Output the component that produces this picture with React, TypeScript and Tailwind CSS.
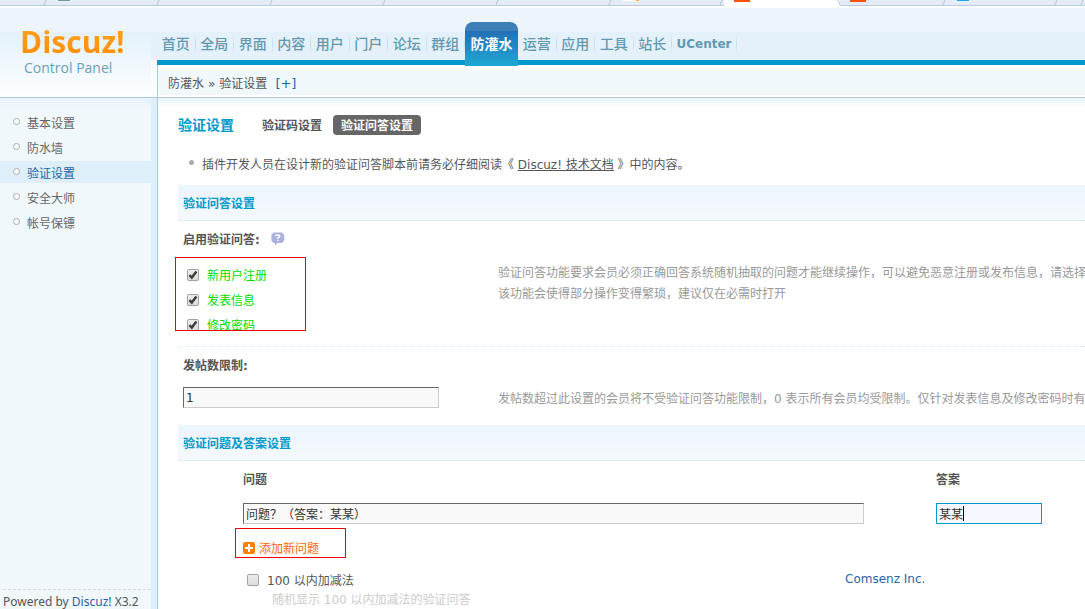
import { useState } from 'react';
import type { ReactNode } from 'react';

const menus = ['首页', '全局', '界面', '内容', '用户', '门户', '论坛', '群组', '防灌水', '运营', '应用', '工具', '站长', 'UCenter'];

const sideMenus = ['基本设置', '防水墙', '验证设置', '安全大师', '帐号保镖'];

const browserTabs = [
  { width: 'w-[48px]', icon: '' },
  { width: 'w-[113px]', icon: 'bg-[#6f9aa0] h-px w-3' },
  { width: 'w-[113px]', icon: '' },
  { width: 'w-[113px]', icon: '' },
  { width: 'w-[113px]', icon: '' },
  { width: 'w-[113px]', icon: '' },
  { width: 'w-[111px]', icon: 'bg-linear-to-r from-white from-80% to-[#ffb020] to-80% h-px w-4' },
  { width: 'w-[116px]', icon: 'bg-[#ff5010] h-0.5 w-4', active: true },
  { width: 'w-[107px]', icon: 'bg-[#ff5010] h-0.5 w-4' },
  { width: 'w-[112px]', icon: 'bg-[#1ba5ea] h-px w-3' },
  { width: 'flex-1', icon: '' },
];

function BrowserTabs() {
  return (
    <div className="flex h-2 shrink-0 overflow-hidden bg-white" aria-hidden="true">
      {browserTabs.map((tab, i) => (
        <div
          key={i}
          className={`flex h-1.5 shrink-0 justify-between border-b pl-2.5 ${tab.width} ${tab.active ? 'border-white bg-white' : 'border-[#b9cce0] bg-[#e3ecf7]'}`}
        >
          <span className={tab.icon} />
          <svg width="5" height="5" viewBox="0 0 5 5" fill="none" stroke="#b0c6dc">
            <path d={tab.active ? 'M3 0 L5 5' : 'M3 0 L1 5'} />
          </svg>
        </div>
      ))}
    </div>
  );
}

function Checkbox({ label, checked = false, className = '' }: { label: string; checked?: boolean; className?: string }) {
  const [on, setOn] = useState(checked);
  return (
    <label className={`flex w-fit items-center gap-2 ${className}`}>
      <span className="grid size-3">
        <input
          type="checkbox"
          checked={on}
          onChange={() => setOn(!on)}
          className="col-start-1 row-start-1 size-3 appearance-none rounded-xs border border-[#a3a3a3] bg-linear-to-b from-[#ededed] to-[#dcdcdc] shadow-xs"
        />
        {on && (
          <svg className="pointer-events-none col-start-1 row-start-1" width="12" height="12" viewBox="0 0 12 12" fill="none" stroke="#3c3c3c" strokeWidth="2.4">
            <path d="M2.4 6.2 L4.8 8.6 L9.4 2.6" />
          </svg>
        )}
      </span>
      <span className="pt-0.5">{label}</span>
    </label>
  );
}

function SectionTitle({ children }: { children: ReactNode }) {
  return (
    <h3 className="h-9 border-b border-dotted border-[#cfe6f5] bg-linear-to-b from-[#ecf4fd] to-[#f5f9fe] pl-[5px] font-bold leading-[38px] text-[#0099cc]">
      {children}
    </h3>
  );
}

export default function App() {
  return (
    <div className="flex h-screen flex-col overflow-hidden bg-white font-['DejaVu_Sans','Noto_Sans_CJK_SC',sans-serif] text-xs text-[#555]">
      <BrowserTabs />

      {/* Header */}
      <header className="flex h-[90px] shrink-0 border-b border-[#b0cbd8] bg-[#edf4fc]">
        <div className="flex w-[151px] shrink-0 flex-col border-b-4 border-white bg-linear-to-b from-[#edf4fc] from-[24px] via-[#e4f1fa] via-[24px] to-[#fafdff] pt-4 pl-5 font-['Open_Sans',sans-serif]">
          <div className="bg-linear-to-b from-[#ffa51f] to-[#ff8a00] bg-clip-text text-[30px] font-bold leading-[36px] text-transparent">Discuz!</div>
          <div className="pl-1 text-sm leading-4 text-[#6aa0b6]">Control Panel</div>
        </div>
        <div className="w-1.5 shrink-0 bg-linear-to-b from-[#edf4fc] from-[24px] to-[#e4f1fa] to-[24px] pt-[52px]">
          <div className="h-[37px] bg-[#fafdff]" />
        </div>

        <div className="flex min-w-0 flex-1 flex-col bg-white">
          <nav className="h-[57px] border-b-5 border-[#0099cc] bg-linear-to-b from-[#edf4fc] from-[24px] to-[#e4f1fa] to-[24px] pt-[14px]">
            <ul className="grid h-[43px] w-[580px] grid-cols-[repeat(8,1fr)_53px_repeat(4,1fr)_65px] text-sm">
              {menus.map((name) =>
                name === '防灌水' ? (
                  <li key={name} className="rounded-t-lg bg-linear-to-b from-[#3f7fb9] from-20% via-[#2370b4] via-20% to-[#1fa8d4] text-center font-bold">
                    <a href="#" className="block leading-[44px] text-white">{name}</a>
                  </li>
                ) : (
                  <li key={name} className="flex items-center justify-center text-[#6299b1]">
                    <a href="#" className={name === 'UCenter' ? 'flex-1 text-center text-xs font-bold' : 'flex-1 text-center font-medium'}>{name}</a>
                    <span className="h-5 w-px bg-linear-to-b from-[#e4f1fa] via-[#c3dcea] to-[#e4f1fa]" />
                  </li>
                ),
              )}
            </ul>
          </nav>
          <div className="flex flex-1 border-l border-[#b0cbd8] pt-[5px] pb-0.5">
            <div className="flex flex-1 items-center gap-1 bg-[#f0f8fc] pt-0.5 pl-[10px]">
              <span>防灌水</span>
              <span>»</span>
              <span>验证设置</span>
              <a href="#" className="pl-1 text-[13px] text-[#2366a8]">[+]</a>
            </div>
          </div>
        </div>
      </header>

      <div className="flex min-h-0 flex-1">
        {/* Sidebar */}
        <aside className="flex w-[158px] shrink-0 flex-col border-r border-[#b0cbd8] bg-[#deeffa]">
          <div className="mr-1.5 flex-1 bg-linear-to-b from-[#e6f2fb] to-[#f0f8fc] to-[10px] pt-[13px]">
            <ul className="flex flex-col gap-[3px]">
              {sideMenus.map((name) => (
                <li key={name} className={name === '验证设置' ? 'bg-[#deeffa] text-[#2366a8]' : 'text-[#666]'}>
                  <a href="#" className="flex h-[22px] items-center gap-[7px] pt-1 pl-[13px]">
                    <span className="mb-1.5 size-[7px] rounded-full border border-[#aaa] bg-white" />
                    {name}
                  </a>
                </li>
              ))}
            </ul>
          </div>
          <footer className="mr-1.5 bg-[#f0f8fc] pl-[3px]">
            <p className="h-5 whitespace-nowrap border-t border-dashed border-[#d5d9dc] pt-1 font-['Noto_Sans',sans-serif] leading-4">
              Powered by <a href="#" className="text-[#2366a8]">Discuz!</a> X3.2
            </p>
          </footer>
        </aside>

        {/* Content */}
        <main className="relative min-w-0 flex-1 overflow-hidden bg-linear-to-b from-[#e6f2fb] to-white to-[9px] pl-5">
          <div className="flex h-[54px] items-center">
            <h2 className="w-[84px] text-sm font-bold text-[#0099cc]">验证设置</h2>
            <a href="#" className="w-[71px] pt-0.5 font-bold">验证码设置</a>
            <a href="#" className="h-5 rounded bg-[#666] px-2 font-bold leading-[22px] text-white">验证问答设置</a>
          </div>

          <ul className="h-[33px]">
            <li className="flex items-center gap-2 whitespace-nowrap pl-[11px] leading-[26px]">
              <span className="mb-1.5 size-[5px] rounded-full bg-[#aaa]" />
              <span>
                插件开发人员在设计新的验证问答脚本前请务必仔细阅读《 <a href="#" className="underline">Discuz! 技术文档</a> 》中的内容。
              </span>
            </li>
          </ul>

          <SectionTitle>验证问答设置</SectionTitle>
          <div className="h-[126px] border-b border-dotted border-[#cfe6f5]">
            <h4 className="flex h-9 items-center gap-[11px] pt-0.5 pl-[5px] font-bold">
              启用验证问答:
              <svg className="mb-0.5" width="14" height="14" viewBox="0 0 14 14">
                <path fill="#aab2dd" d="M2.5 0.5h8.5L13.3 3v5.500L11 11H6.500L4 13.400V11H2.500L0.400 8.800V3z" />
                <path fill="none" stroke="#fff" strokeWidth="1.400" d="M4.800 4q0-1 2-1t2 1.200q0 1-1.900 1.500v1M6.900 7.700v1.300" />
              </svg>
            </h4>
            <div className="flex items-start">
              <div className="-ml-[3px] flex h-[74px] w-[131px] shrink-0 flex-col gap-[5px] overflow-hidden border border-[#f00000] pt-[7px] pl-[11px] leading-[18px] text-[#00dd00]">
                <Checkbox label="新用户注册" checked />
                <Checkbox label="发表信息" checked />
                <Checkbox label="修改密码" checked />
              </div>
              <p className="ml-48 min-w-0 flex-1 pt-1.5 leading-[21px] whitespace-nowrap text-[#999]">
                验证问答功能要求会员必须正确回答系统随机抽取的问题才能继续操作，可以避免恶意注册或发布信息，请选择
                <br />
                该功能会使得部分操作变得繁琐，建议仅在必需时打开
              </p>
            </div>
          </div>

          <div className="h-[78px]">
            <label htmlFor="minposts" className="block h-10 pl-[5px] font-bold leading-[38px]">发帖数限制:</label>
            <div className="flex items-center pl-[5px]">
              <input
                id="minposts"
                defaultValue="1"
                className="h-[21px] w-64 shrink-0 border border-t-[#666] border-r-[#ccc] border-b-[#ccc] border-l-[#666] bg-[#f9f9f9] px-0.5 text-[#333]"
              />
              <p className="ml-[59px] whitespace-nowrap pt-0.5 text-[#999]">
                发帖数超过此设置的会员将不受验证问答功能限制，0 表示所有会员均受限制。仅针对发表信息及修改密码时有
              </p>
            </div>
          </div>

          <SectionTitle>验证问题及答案设置</SectionTitle>
          <div className="flex pl-[65px]">
            <div className="w-[693px] shrink-0">
              <label htmlFor="question" className="block h-[42px] font-bold leading-[38px]">问题</label>
              <input
                id="question"
                defaultValue="问题？（答案：某某）"
                className="block h-[21px] w-[621px] border border-t-[#666] border-r-[#ccc] border-b-[#ccc] border-l-[#666] bg-[#f9f9f9] px-0.5 text-[#333]"
              />
            </div>
            <div>
              <label htmlFor="answer" className="block h-[42px] font-bold leading-[38px]">答案</label>
              <div className="relative">
                <input
                  id="answer"
                  defaultValue="某某"
                  className="block h-[21px] w-[106px] border border-[#0099cc] bg-[#f5f9ff] px-0.5 text-[#333] outline-none"
                />
                <span className="absolute top-[3px] left-[27px] h-[15px] w-px bg-black" />
              </div>
            </div>
          </div>

          <div className="mt-1 pl-[57px]">
            <button type="button" className="flex h-[30px] w-[111px] items-end gap-1 border border-[#f00000] pl-[7px] leading-4 text-[#ff6600]">
              <svg className="mb-[3px]" width="12" height="12" viewBox="0 0 12 12">
                <rect width="12" height="12" rx="2" fill="#ff8000" />
                <path d="M6 2v8M2 6h8" stroke="#fff" strokeWidth="2" />
              </svg>
              <span>添加新问题</span>
            </button>
          </div>
          <div className="pt-3 pl-[69px]">
            <Checkbox label="100 以内加减法" className="leading-[18px]" />
            <p className="pl-[25px] leading-5 text-[#ccc]">随机显示 100 以内加减法的验证问答</p>
          </div>

          <a href="#" className="absolute top-[473px] left-[687px] leading-4 text-[#2366a8]">Comsenz Inc.</a>
        </main>
      </div>
    </div>
  );
}
